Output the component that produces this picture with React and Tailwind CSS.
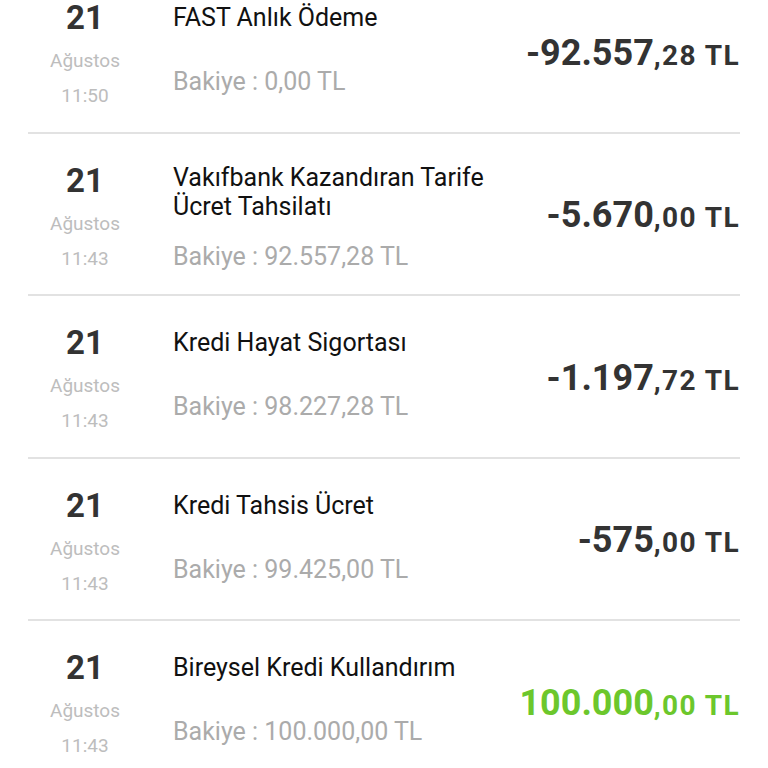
import React from "react";

const rows = [
  { day: "21", month: "Ağustos", time: "11:50", title: ["FAST Anlık Ödeme"], balance: "0,00 TL", whole: "-92.557", frac: ",28", positive: false },
  { day: "21", month: "Ağustos", time: "11:43", title: ["Vakıfbank Kazandıran Tarife", "Ücret Tahsilatı"], balance: "92.557,28 TL", whole: "-5.670", frac: ",00", positive: false },
  { day: "21", month: "Ağustos", time: "11:43", title: ["Kredi Hayat Sigortası"], balance: "98.227,28 TL", whole: "-1.197", frac: ",72", positive: false },
  { day: "21", month: "Ağustos", time: "11:43", title: ["Kredi Tahsis Ücret"], balance: "99.425,00 TL", whole: "-575", frac: ",00", positive: false },
  { day: "21", month: "Ağustos", time: "11:43", title: ["Bireysel Kredi Kullandırım"], balance: "100.000,00 TL", whole: "100.000", frac: ",00", positive: true },
];

function Row({ row }) {
  const twoLines = row.title.length > 1;

  return (
    <div className="mx-[28px] flex h-[162.5px] items-stretch border-b-2 border-[#e2e2e2]">
      {/* date column */}
      <div className="flex w-[114px] shrink-0 flex-col items-center pt-[28px]">
        <div className="text-[33px] font-bold leading-[38px] text-[#333]">{row.day}</div>
        <div className="mt-[13px] text-[19px] leading-[22px] text-[#bdbdbd]">{row.month}</div>
        <div className="mt-[13px] text-[19px] leading-[22px] text-[#bdbdbd]">{row.time}</div>
      </div>

      {/* title + balance */}
      <div className={twoLines ? "ml-[31px] flex flex-1 flex-col pt-[29px]" : "ml-[31px] flex flex-1 flex-col pt-[32px]"}>
        {row.title.map((t) => (
          <div key={t} className="text-[25px] leading-[29px] text-[#111]">{t}</div>
        ))}
        <div className={twoLines ? "mt-[22px] text-[25px] leading-[28px] text-[#ababab]" : "mt-[36px] text-[25px] leading-[28px] text-[#ababab]"}>
          Bakiye : {row.balance}
        </div>
      </div>

      {/* amount */}
      <div className="flex items-center pt-[3px]">
        <div
          className={
            row.positive
              ? "whitespace-nowrap text-[36px] font-bold leading-none text-[#6cc72c]"
              : "whitespace-nowrap text-[36px] font-bold leading-none text-[#333]"
          }
        >
          {row.whole}
          <span className="text-[28px] tracking-[1.4px]">{row.frac} TL</span>
        </div>
      </div>
    </div>
  );
}

export default function App() {
  return (
    <div className="h-screen overflow-hidden bg-white font-['Roboto',sans-serif]">
      <div className="-mt-[29px]">
        {rows.map((r, i) => (
          <Row key={i} row={r} />
        ))}
      </div>
    </div>
  );
}
